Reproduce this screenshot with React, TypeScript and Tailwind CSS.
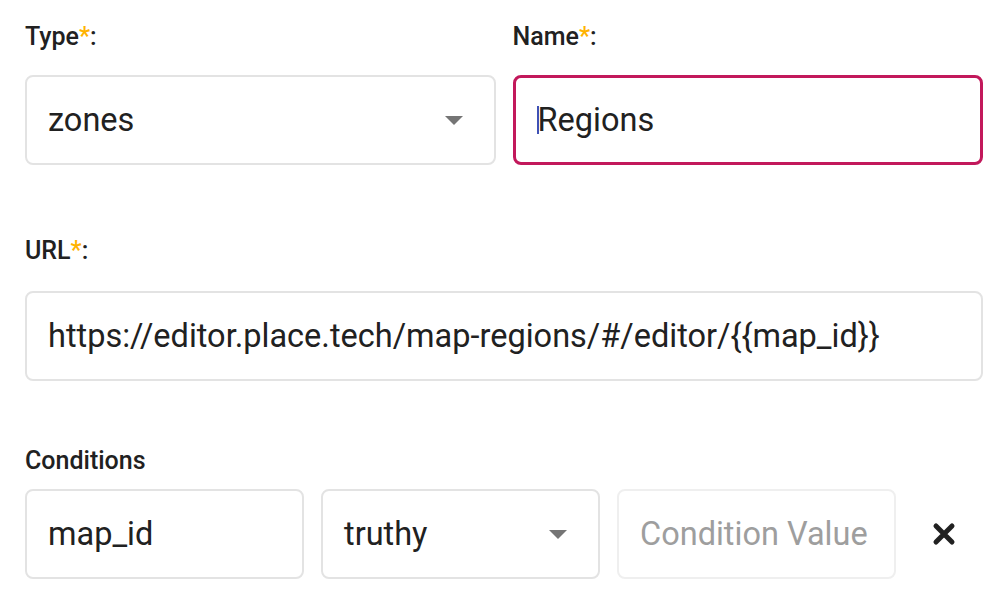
import { useState } from "react";

function Label({ text, required = true }: { text: string; required?: boolean }) {
  return (
    <div className="text-[25px] leading-[29px] font-medium text-[#212121]">
      {text}
      {required && <span className="text-[#ffb300]">*</span>}
      {required && ":"}
    </div>
  );
}

function Caret() {
  return (
    <svg width="18" height="9" viewBox="0 0 18 9" className="shrink-0">
      <path d="M0 0h18L9 9z" fill="#757575" />
    </svg>
  );
}

export default function App() {
  const [url, setUrl] = useState("https://editor.place.tech/map-regions/#/editor/{{map_id}}");
  const [key, setKey] = useState("map_id");
  const [value, setValue] = useState("");

  return (
    <div
      className="bg-white min-h-[606px] pl-[25px] pr-[21px] pt-[22px] text-[#212121]"
      style={{ fontFamily: "Roboto, 'Noto Sans', sans-serif" }}
    >
      <div className="grid grid-cols-2 gap-[17px]">
        <div>
          <Label text="Type" />
          <div className="mt-[24px] h-[90px] rounded-[8px] border-2 border-[#e3e3e3] flex items-center justify-between pl-[21px] pr-[31px]">
            <span className="text-[32.5px]">zones</span>
            <Caret />
          </div>
        </div>
        <div>
          <Label text="Name" />
          <div className="mt-[24px] h-[90px] rounded-[8px] border-[3px] border-[#c2185b] flex items-center pl-[21px] pr-4">
            <span className="inline-block w-[2px] h-[28px] bg-[#3f51b5] mr-[-1px]" />
            <span className="text-[32.5px]">Regions</span>
          </div>
        </div>
      </div>

      <div className="mt-[71px]">
        <Label text="URL" />
        <div className="mt-[26px] h-[90px] rounded-[8px] border-2 border-[#e3e3e3] flex items-center pl-[21px] pr-4">
          <input
            value={url}
            onChange={(e) => setUrl(e.target.value)}
            className="w-full text-[32.5px] outline-none bg-transparent"
          />
        </div>
      </div>

      <div className="mt-[65px]">
        <Label text="Conditions" required={false} />
        <div className="mt-[14px] flex items-center gap-[17px]">
          <div className="w-[279px] h-[90px] rounded-[8px] border-2 border-[#e3e3e3] flex items-center pl-[21px] pr-4">
            <input
              value={key}
              onChange={(e) => setKey(e.target.value)}
              className="w-full text-[32.5px] outline-none bg-transparent"
            />
          </div>
          <div className="w-[279px] h-[90px] rounded-[8px] border-2 border-[#e3e3e3] flex items-center justify-between pl-[21px] pr-[31px]">
            <span className="text-[32.5px]">truthy</span>
            <Caret />
          </div>
          <div className="w-[279px] h-[90px] rounded-[8px] border-2 border-[#efefef] flex items-center pl-[21px] pr-2">
            <input
              value={value}
              onChange={(e) => setValue(e.target.value)}
              placeholder="Condition Value"
              className="w-full text-[32.5px] outline-none bg-transparent placeholder:text-[#9e9e9e]"
            />
          </div>
          <button className="ml-[18px] w-[26px] h-[26px] flex items-center justify-center">
            <svg width="24" height="24" viewBox="0 0 24 24">
              <path d="M4 4l16 16M20 4L4 20" stroke="#212121" strokeWidth="5" strokeLinecap="round" />
            </svg>
          </button>
        </div>
      </div>
    </div>
  );
}
